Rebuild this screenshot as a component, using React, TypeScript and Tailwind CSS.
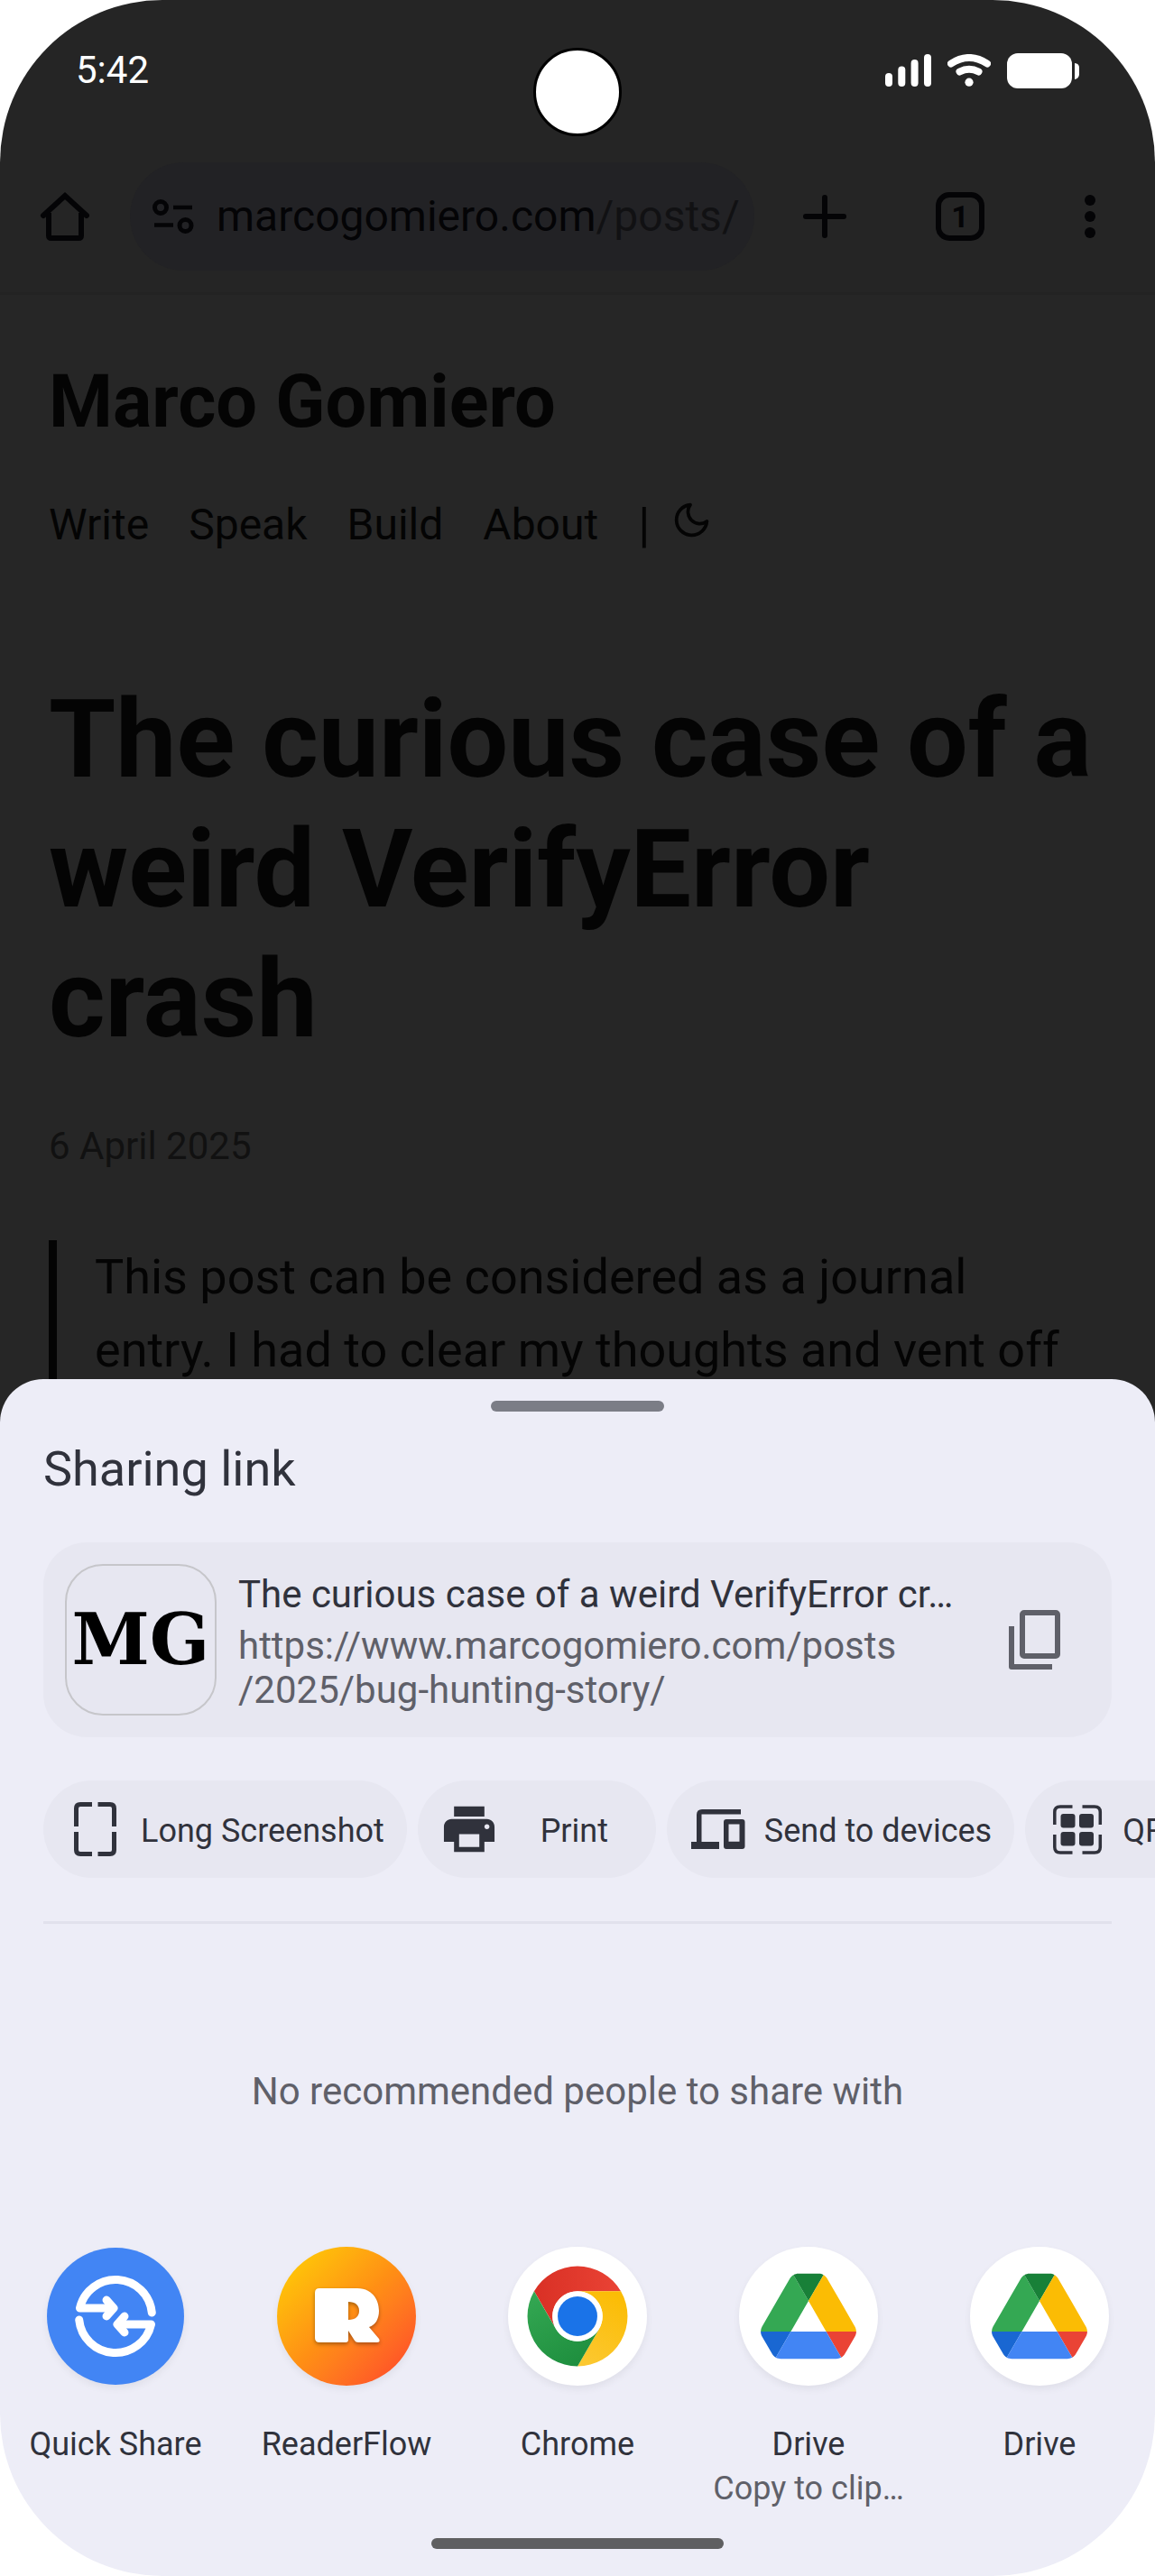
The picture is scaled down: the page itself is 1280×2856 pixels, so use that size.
import type { ReactNode } from "react";

const SignalIcon = () => (
  <svg className="h-9 w-[51px]" viewBox="0 0 51 36" fill="white" aria-hidden="true">
    <rect x="0" y="21" width="8" height="15" rx="4" />
    <rect x="14.3" y="13.5" width="8" height="22.5" rx="4" />
    <rect x="28.6" y="6" width="8" height="30" rx="4" />
    <rect x="43" y="0" width="8" height="36" rx="4" />
  </svg>
);

const WifiIcon = () => (
  <svg className="h-9 w-12" viewBox="0 0 48 36" fill="none" stroke="white" strokeWidth="8" strokeLinecap="round" aria-hidden="true">
    <path d="M4 10.5 Q24 -2.5 44 10.5" />
    <path d="M13.5 19.5 Q24 14 34.5 19.5" />
    <circle cx="24" cy="31.2" r="4.6" fill="white" stroke="none" />
  </svg>
);

const BatteryIcon = () => (
  <svg className="h-[39px] w-20" viewBox="0 0 80 39" fill="white" aria-hidden="true">
    <rect width="72" height="39" rx="12" />
    <path d="M75 11 Q80 11.5 80 16 V23 Q80 28 75 29 Z" />
  </svg>
);

const HomeIcon = () => (
  <svg className="size-15" viewBox="0 0 60 60" fill="none" stroke="#040406" strokeWidth="6" aria-hidden="true">
    <path d="M6 29 L30 7 L54 29" strokeLinecap="round" />
    <path d="M12 26 V51 Q12 54 15 54 H45 Q48 54 48 51 V26" />
  </svg>
);

const TuneIcon = () => (
  <svg className="size-12 shrink-0" viewBox="0 0 48 48" fill="none" stroke="#040406" strokeWidth="5" aria-hidden="true">
    <circle cx="10" cy="14" r="6.5" />
    <path d="M24 14 H45 M3 33.5 H24" strokeWidth="4.5" />
    <circle cx="37.5" cy="34" r="6.5" />
  </svg>
);

const PlusIcon = () => (
  <svg className="size-15" viewBox="0 0 60 60" fill="none" stroke="#040406" strokeWidth="6" strokeLinecap="round" aria-hidden="true">
    <path d="M9 30 H51 M30 9 V51" />
  </svg>
);

const DotsIcon = () => (
  <svg className="size-15" viewBox="0 0 60 60" fill="#040406" aria-hidden="true">
    <circle cx="30" cy="12" r="6" />
    <circle cx="30" cy="30" r="6" />
    <circle cx="30" cy="48" r="6" />
  </svg>
);

const MoonIcon = () => (
  <svg className="size-[45px]" viewBox="0 0 24 24" fill="none" stroke="#040404" strokeWidth="2" strokeLinecap="round" strokeLinejoin="round" aria-hidden="true">
    <path d="M21 12.79A9 9 0 1 1 11.21 3 7 7 0 0 0 21 12.79z" />
  </svg>
);

const CopyIcon = () => (
  <svg className="size-[72px]" viewBox="0 0 72 72" fill="none" stroke="#5f6069" strokeWidth="6" strokeLinejoin="round" aria-hidden="true">
    <rect x="23" y="6" width="39" height="48" rx="2" />
    <path d="M11 21 V66 H56" />
  </svg>
);

const LongScreenshotIcon = () => (
  <svg className="size-15 shrink-0" viewBox="0 0 60 60" fill="none" stroke="#30323c" strokeWidth="5" aria-hidden="true">
    <path d="M27 2.5 H14 Q9.500 2.500 9.500 7 V27 M9.500 33 V53 Q9.500 57.500 14 57.500 H27 M33.500 57.500 H47 Q51.500 57.500 51.500 53 V33 M51.500 27 V7 Q51.500 2.500 47 2.500 H33.500" />
  </svg>
);

const PrintIcon = () => (
  <svg className="size-15 shrink-0" viewBox="1.3 1.300 21.400 21.400" fill="#30323c" aria-hidden="true">
    <path d="M19 8H5c-1.660 0-3 1.340-3 3v6h4v4h12v-4h4v-6c0-1.660-1.340-3-3-3zm-3 11H8v-5h8v5zm3-7c-.55 0-1-.45-1-1s.45-1 1-1 1 .45 1 1-.45 1-1 1zm-1-9H6v4h12V3z" />
  </svg>
);

const DevicesIcon = () => (
  <svg className="size-15 shrink-0" viewBox="0 0 60 60" fill="#30323c" aria-hidden="true">
    <path d="M55 8 H12 Q6 8 6 14 V44 H0 V52 H31 V44 H11.500 V13.500 H55 Z" />
    <path fillRule="evenodd" d="M39 19 H56.500 Q59.500 19 59.500 22 V49 Q59.500 52 56.500 52 H39 Q36 52 36 49 V22 Q36 19 39 19 Z M41.500 24.500 V43.700 H53.500 V24.500 Z" />
  </svg>
);

const QrIcon = () => (
  <svg className="size-15 shrink-0" viewBox="0 0 60 60" fill="#30323c" aria-hidden="true">
    <path
      fill="none"
      stroke="#30323c"
      strokeWidth="3.5"
      d="M25.500 5 H12 Q5.800 5 5.800 11 V25 M5.800 36 V50 Q5.800 56 12 56 H25.500 M36.500 56 H50 Q56.300 56 56.300 50 V36 M56.300 25 V11 Q56.300 5 50 5 H36.500"
    />
    <rect x="12.500" y="13" width="16" height="15.500" rx="3" />
    <rect x="33" y="13" width="16" height="15.500" rx="3" />
    <rect x="12.500" y="33" width="16" height="15.500" rx="3" />
    <rect x="33" y="33" width="16" height="15.500" rx="3" />
  </svg>
);

const QuickShareLogo = () => (
  <svg className="size-[152px] rounded-full bg-[#4285f4] shadow-[0_4px_8px_rgba(0,0,0,0.06)]" viewBox="-76 -76 152 152" fill="none" stroke="white" strokeWidth="9" strokeLinecap="round" strokeLinejoin="round" aria-hidden="true">
    <path d="M-3 -9 H-39.500 A40.500 40.500 0 0 1 40.300 -4" />
    <path d="M-10 -18 L-2 -9 L-10 0" />
    <path d="M3 9 H39.500 A40.500 40.500 0 0 1 -40.300 4" />
    <path d="M10 18 L2 9 L10 0" />
  </svg>
);

const ReaderFlowLogo = () => (
  <svg className="size-[154px] rounded-full bg-linear-to-br from-[#ffd400] via-[#ff8f14] to-[#ff3a2a] shadow-[0_4px_8px_rgba(0,0,0,0.06)]" viewBox="-77 -77 154 154" aria-hidden="true">
    <path
      className="drop-shadow-[0_2px_2px_rgba(0,0,0,0.35)]"
      fill="white"
      fillRule="evenodd"
      d="M-30 -31 H12 C27 -31 36 -20 36 -6 C36 3 32 10 25 12 L36 25 Q38 29 34 29 H13 Q10 29 9 27 L2 16 V26 Q2 29 -1 29 H-30 Q-35 29 -35 24 V-26 Q-35 -31 -30 -31 Z M2 -16 V4 C10 4 14 0 14 -6 C14 -12 10 -16 2 -16 Z"
    />
  </svg>
);

const ChromeLogo = () => (
  <svg className="size-[154px] rounded-full bg-white shadow-[0_4px_8px_rgba(0,0,0,0.06)]" viewBox="-9.300 -9.300 66.600 66.600" aria-hidden="true">
    <defs>
      <linearGradient id="chrome-red" x1="3" y1="16" x2="45" y2="16" gradientUnits="userSpaceOnUse">
        <stop offset="0" stopColor="#d93025" />
        <stop offset="1" stopColor="#ea4335" />
      </linearGradient>
      <linearGradient id="chrome-yellow" x1="21" y1="47" x2="41" y2="12" gradientUnits="userSpaceOnUse">
        <stop offset="0" stopColor="#fcc934" />
        <stop offset="1" stopColor="#fbbc04" />
      </linearGradient>
      <linearGradient id="chrome-green" x1="27" y1="46" x2="6" y2="10" gradientUnits="userSpaceOnUse">
        <stop offset="0" stopColor="#1e8e3e" />
        <stop offset="1" stopColor="#34a853" />
      </linearGradient>
    </defs>
    <path fill="url(#chrome-red)" d="M24 12h20.781A24 24 0 0 0 3.216 12.003l10.390 17.997A12 12 0 0 1 24 12z" />
    <path fill="url(#chrome-yellow)" d="M34.391 30.003L24.001 47.998A24 24 0 0 0 44.780 12.003H23.999A12 12 0 0 1 34.391 30.003z" />
    <path fill="url(#chrome-green)" d="M13.609 30.003L3.218 12.006A24 24 0 0 0 24.003 48l10.390-17.997A12 12 0 0 1 13.609 30.003z" />
    <circle cx="24" cy="24" r="12" fill="white" />
    <circle cx="24" cy="24" r="9.500" fill="#1a73e8" />
  </svg>
);

const DriveLogo = () => (
  <svg className="size-[154px] rounded-full bg-white shadow-[0_4px_8px_rgba(0,0,0,0.06)]" viewBox="-19.850 -24.500 127 127" aria-hidden="true">
    <path fill="#1967d2" d="m6.600 66.850 3.850 6.650c.8 1.400 1.950 2.500 3.300 3.300l13.750-23.800h-27.500c0 1.550.4 3.100 1.200 4.500z" />
    <path fill="#34a853" d="m43.650 25-13.750-23.800c-1.350.8-2.500 1.900-3.300 3.300l-25.400 44a9.060 9.060 0 0 0 -1.200 4.500h27.500z" />
    <path fill="#ea4335" d="m73.550 76.800c1.350-.8 2.500-1.900 3.300-3.300l1.600-2.750 7.650-13.250c.8-1.400 1.200-2.950 1.200-4.500h-27.500z" />
    <path fill="#188038" d="m43.650 25 13.750-23.800c-1.350-.8-2.900-1.200-4.500-1.200h-18.500c-1.600 0-3.150.45-4.500 1.200z" />
    <path fill="#4285f4" d="m59.800 53h-32.300l-13.750 23.800c1.350.8 2.900 1.200 4.500 1.200h50.800c1.600 0 3.150-.45 4.500-1.200z" />
    <path fill="#fbbc04" d="m73.400 26.500-12.700-22c-.8-1.400-1.950-2.500-3.300-3.300l-13.750 23.800 16.150 28h27.450c0-1.550-.4-3.100-1.200-4.500z" />
  </svg>
);

const navLinks = ["Write", "Speak", "Build", "About"];

const actions: { label: string; icon: ReactNode }[] = [
  { label: "Long Screenshot", icon: <LongScreenshotIcon /> },
  { label: "Print", icon: <PrintIcon /> },
  { label: "Send to devices", icon: <DevicesIcon /> },
  { label: "QR Code", icon: <QrIcon /> },
];

const targets: { id: string; label: string; detail?: string; icon: ReactNode }[] = [
  { id: "quick-share", label: "Quick Share", icon: <QuickShareLogo /> },
  { id: "readerflow", label: "ReaderFlow", icon: <ReaderFlowLogo /> },
  { id: "chrome", label: "Chrome", icon: <ChromeLogo /> },
  { id: "drive-copy", label: "Drive", detail: "Copy to clip…", icon: <DriveLogo /> },
  { id: "drive", label: "Drive", icon: <DriveLogo /> },
];

const StatusBar = () => (
  <div className="relative flex h-[156px] items-center justify-between bg-[#252525] px-[84px]">
    <span className="text-[42px] leading-[48px] text-white">5:42</span>
    <div className="absolute top-[53px] left-1/2 size-[98px] -translate-x-1/2 rounded-full border-[3px] border-black bg-white" />
    <div className="flex items-center gap-[18px]">
      <SignalIcon />
      <WifiIcon />
      <BatteryIcon />
    </div>
  </div>
);

const Toolbar = () => (
  <header className="flex h-[171px] items-start border-b-[3px] border-[#232323] bg-[#252525] px-[42px] pt-6">
    <button type="button" aria-label="Home" className="flex h-[120px] items-center">
      <HomeIcon />
    </button>
    <button type="button" className="mx-[42px] flex h-[120px] min-w-0 flex-1 items-center gap-6 rounded-full bg-[#222225] pr-3 pl-6 text-left">
      <TuneIcon />
      <span className="text-[48px] leading-[60px] whitespace-nowrap text-[#040406]">
        marcogomiero.com<span className="text-[#111113]">/posts/</span>
      </span>
    </button>
    <button type="button" aria-label="New tab" className="ml-[6px] flex h-[120px] items-center">
      <PlusIcon />
    </button>
    <button type="button" aria-label="Switch tabs" className="ml-[90px] flex h-[120px] items-center px-[3px]">
      <span className="flex size-[54px] items-center justify-center rounded-[15px] border-6 border-[#040406] text-[34px] leading-10 font-bold text-[#040406]">1</span>
    </button>
    <button type="button" aria-label="More options" className="ml-[84px] flex h-[120px] items-center">
      <DotsIcon />
    </button>
  </header>
);

const Article = () => (
  <main className="bg-[#262626] px-[54px] pt-[70px] text-[#040404]">
    <a href="#home" className="block text-[81px] leading-[97px] font-bold">Marco Gomiero</a>
    <nav className="mt-[52px] flex items-center gap-[44px] text-[48px] leading-[72px]">
      {navLinks.map((link) => (
        <a key={link} href={`#${link.toLowerCase()}`}>{link}</a>
      ))}
      <span className="text-[54px]">|</span>
      <button type="button" aria-label="Toggle dark theme" className="-ml-5 pb-3">
        <MoonIcon />
      </button>
    </nav>
    <h1 className="mt-[130px] text-[120px] leading-[144px] font-bold">The curious case of a weird VerifyError crash</h1>
    <time dateTime="2025-04-06" className="mt-[60px] block text-[42px] leading-[62px] text-[#111111]">6 April 2025</time>
    <blockquote className="mt-[73px] border-l-9 border-[#040404] pr-6 pb-12 pl-[42px] text-[54px] leading-[81px]">
      This post can be considered as a journal entry. I had to clear my thoughts and vent off
    </blockquote>
  </main>
);

const LinkPreview = () => (
  <section className="mt-[45px] flex items-center rounded-[48px] bg-[#e7e7f1] py-6 pr-[50px] pl-6">
    <div className="flex size-[168px] shrink-0 items-center justify-center rounded-[42px] border-2 border-[#c6c6ca] font-['DejaVu_Serif',serif] text-[78px] leading-none font-bold text-black">
      MG
    </div>
    <div className="ml-6 min-w-0 flex-1 pt-1 text-[42px] leading-[49px]">
      <p className="truncate text-[#30323c]">The curious case of a weird VerifyError cr…</p>
      <p className="mt-2 text-[#5f6069]">
        https://www.marcogomiero.com/posts
        <br />
        /2025/bug-hunting-story/
      </p>
    </div>
    <button type="button" aria-label="Copy link" className="ml-4 shrink-0">
      <CopyIcon />
    </button>
  </section>
);

const ShareSheet = () => (
  <section aria-label="Share" className="relative -mt-14 rounded-t-[48px] bg-[#ededf7] pt-6 pb-[30px] text-[#30323c]">
    <div className="mx-auto h-3 w-48 rounded-full bg-[#7b7d86]" />
    <div className="px-12">
      <h2 className="mt-7 text-[54px] leading-[72px]">Sharing link</h2>
      <LinkPreview />
    </div>
    <div className="mt-12 flex gap-3 overflow-hidden pl-12">
      {actions.map((action) => (
        <button
          key={action.label}
          type="button"
          className="flex h-[108px] min-w-[264px] shrink-0 items-center rounded-full bg-[#e7e7f1] pr-[25px] pl-[27px] text-[36px] leading-[42px] whitespace-nowrap"
        >
          {action.icon}
          <span className="ml-[21px] flex-1 pt-1 text-center">{action.label}</span>
        </button>
      ))}
    </div>
    <hr className="mx-12 mt-12 border-t-3 border-[#e1e1ec]" />
    <p className="pt-[162px] pb-[148px] text-center text-[42px] leading-12 text-[#5f6069]">No recommended people to share with</p>
    <div className="grid grid-cols-5">
      {targets.map((target) => (
        <button key={target.id} type="button" className="flex flex-col items-center text-[36px] leading-[49px]">
          <span className="flex h-[154px] items-center">{target.icon}</span>
          <span className="mt-[41px]">{target.label}</span>
          {target.detail && <span className="text-[#5f6069]">{target.detail}</span>}
        </button>
      ))}
    </div>
    <div className="mx-auto mt-[30px] h-3 w-[324px] rounded-full bg-[#5f5f61]" />
  </section>
);

export default function App() {
  return (
    <div className="bg-white font-[Roboto,sans-serif]">
      <div className="overflow-hidden rounded-[180px]">
        <StatusBar />
        <Toolbar />
        <Article />
        <ShareSheet />
      </div>
    </div>
  );
}
